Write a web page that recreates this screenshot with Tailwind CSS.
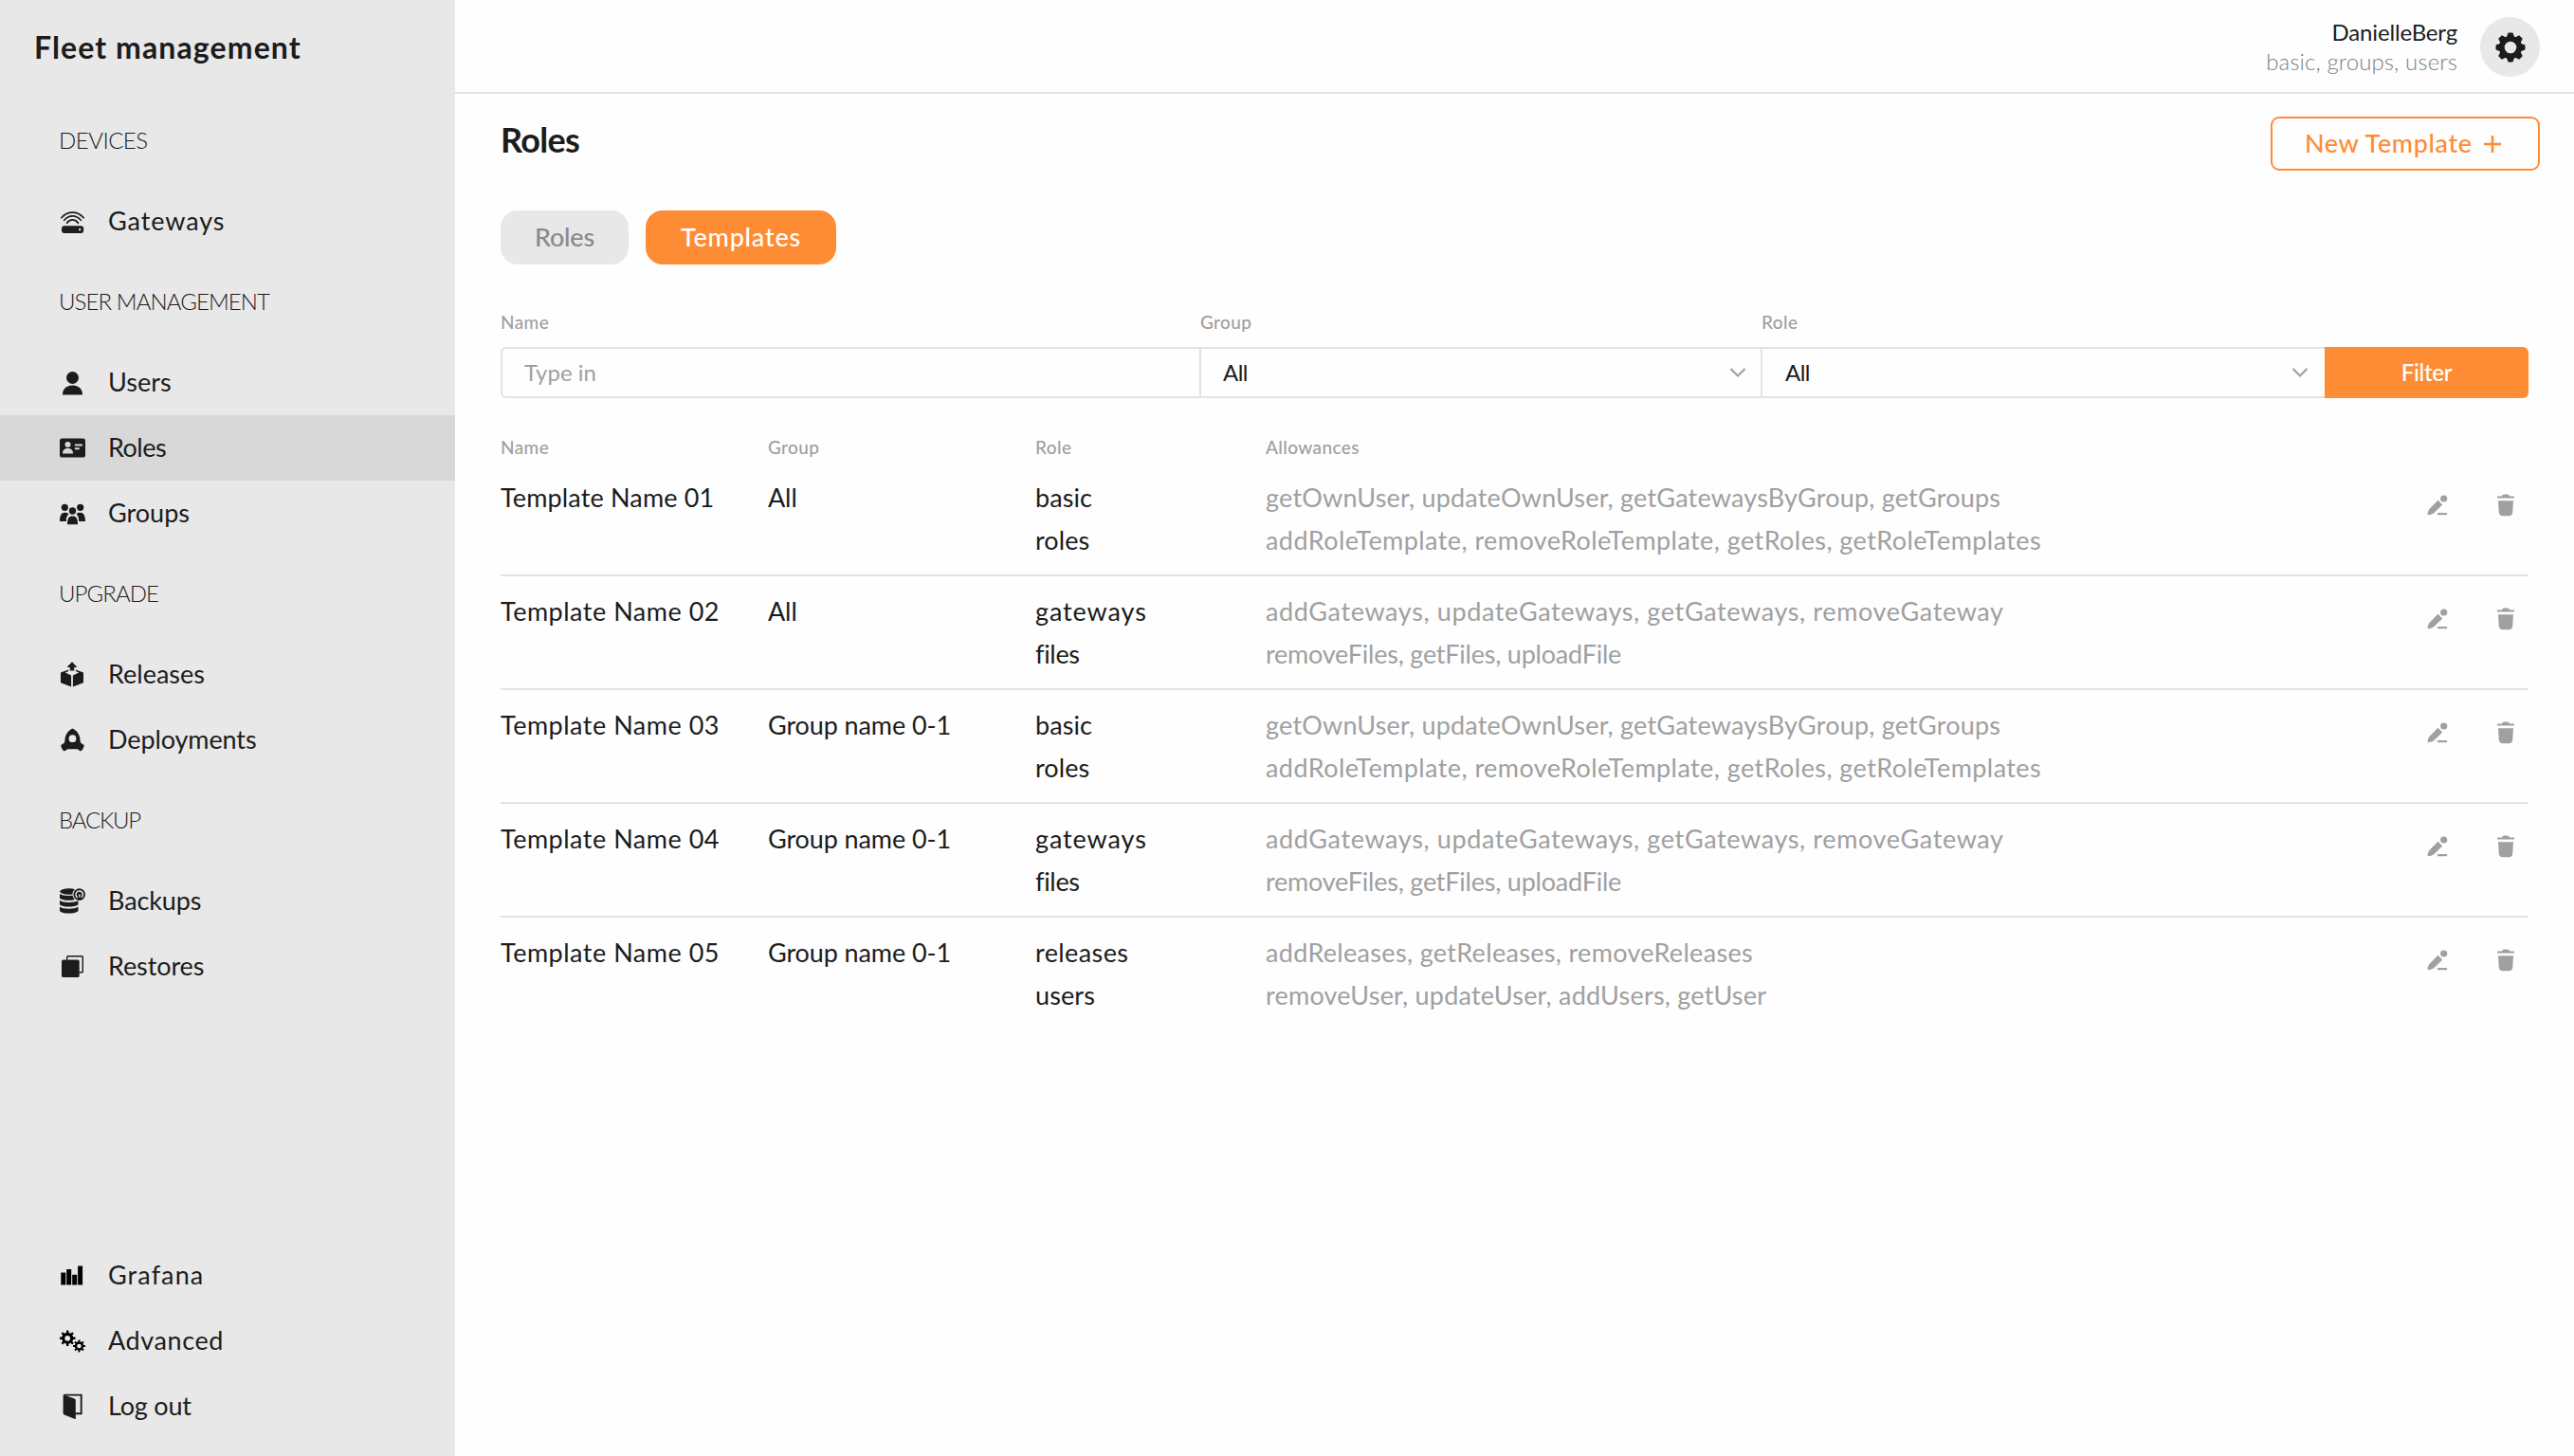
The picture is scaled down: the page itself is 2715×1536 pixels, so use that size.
<!DOCTYPE html>
<html lang="en">
<head>
    <meta charset="UTF-8">
    <meta name="viewport" content="width=device-width, initial-scale=1.0">
    <title>Fleet management</title>
    <script src="https://cdn.jsdelivr.net/npm/@tailwindcss/browser@4"></script>
</head>
<body class="bg-[#fefefe] h-screen flex overflow-hidden font-['Lato',sans-serif] text-[#1c1c1c]">

    <!-- Sidebar -->
    <aside class="w-[480px] h-full shrink-0 bg-[#e8e8e8] flex flex-col pb-[18px]">
        <h1 class="h-[98px] pl-[36px] pt-[30px] text-[32px] leading-[40px] font-bold tracking-[1.1px]">Fleet management</h1>

        <nav class="flex flex-col">
            <h2 class="h-[101px] flex items-center pl-[62px] pb-px text-[24px] font-light tracking-[-0.5px]">DEVICES</h2>
            <a class="h-[69px] flex items-center pl-[63px] gap-[24px] text-[27px] tracking-[0.9px]">
                <svg class="size-[27px]" viewBox="0 0 27 27" fill="none" stroke="currentColor" stroke-width="1.7" stroke-linecap="round">
                    <path d="M1.8 9.8C8.4 2.2 18.6 2.2 25.2 9.8M4.7 12.3C9.9 6.4 17.1 6.4 22.3 12.3M7.6 15.3C10.7 10.8 16.3 10.8 19.4 15.3" />
                    <path fill="currentColor" stroke="none" fill-rule="evenodd" d="M5 18.3h17.2a3 3 0 0 1 3 3V23a3 3 0 0 1-3 3H5a3 3 0 0 1-3-3v-1.7a3 3 0 0 1 3-3zM20.2 21.1v2.2h2v-2.2z" />
                </svg>
                Gateways
            </a>

            <h2 class="h-[101px] flex items-center pl-[62px] pb-px text-[24px] font-light tracking-[-0.9px]">USER MANAGEMENT</h2>
            <a class="h-[69px] flex items-center pl-[63px] gap-[24px] text-[27px]">
                <svg class="size-[27px]" viewBox="0 0 27 27" fill="currentColor">
                    <circle cx="13.5" cy="8.5" r="6.5" />
                    <path d="M3 26.5C3 20 7.5 16.6 13.5 16.6S24 20 24 26.5z" />
                </svg>
                Users
            </a>
            <a class="h-[69px] flex items-center pl-[63px] gap-[24px] text-[27px] tracking-[-0.5px] bg-[#d8d8d8]">
                <svg class="size-[27px]" viewBox="0 0 27 27">
                    <rect y="3.5" width="27" height="20" rx="2.6" fill="currentColor" />
                    <g fill="#d8d8d8">
                        <circle cx="8.5" cy="10" r="3" />
                        <path d="M3 19.6C3 16 5 14.1 8.5 14.1S14 16 14 19.6z" />
                        <rect x="15.7" y="9.5" width="8.5" height="2" rx="1" />
                        <rect x="15.7" y="13.2" width="5.3" height="2" rx="1" />
                    </g>
                </svg>
                Roles
            </a>
            <a class="h-[69px] flex items-center pl-[63px] gap-[24px] text-[27px]">
                <svg class="size-[27px]" viewBox="0 0 27 27" fill="currentColor">
                    <circle cx="5.3" cy="7.3" r="3.6" />
                    <circle cx="21.7" cy="7.3" r="3.6" />
                    <circle cx="13.5" cy="11" r="3.7" />
                    <path d="M0 22C0 15.5 2 12.8 5.3 12.8C7 12.8 8.4 13.2 9.5 14.3C7.5 16 6.8 18.5 6.8 22z" />
                    <path d="M27 22C27 15.5 25 12.8 21.7 12.8C20 12.8 18.6 13.2 17.5 14.3C19.5 16 20.2 18.5 20.2 22z" />
                    <path d="M8 25.3C8 19 9.5 16.5 13.5 16.5S19 19 19 25.3z" />
                </svg>
                Groups
            </a>

            <h2 class="h-[101px] flex items-center pl-[62px] pb-[2px] text-[24px] font-light tracking-[-0.9px]">UPGRADE</h2>
            <a class="h-[69px] flex items-center pl-[63px] gap-[24px] text-[27px]">
                <svg class="size-[27px]" viewBox="0 0 27 27" fill="currentColor">
                    <path d="M13 .3L17.9 5.2V6H15.2V9.6H10.8V6H8.1V5.2z" />
                    <path d="M1 11.5L9.2 8.6V10L5.8 11.4L12.1 14.6V26.6L1 22.3z" />
                    <path d="M25 11.5L16.8 8.6V10L20.2 11.4L13.9 14.6V26.6L25 22.3z" />
                </svg>
                Releases
            </a>
            <a class="h-[69px] flex items-center pl-[63px] gap-[24px] text-[27px] tracking-[-0.1px]">
                <svg class="size-[27px]" viewBox="0 0 27 27" fill="currentColor" fill-rule="evenodd">
                    <path d="M13.5 1.4C18.5 3.5 21.5 9 21.5 13.5L22 16.5L25.5 18.9C26.3 20 24 24.5 22.5 25.2C20.5 25.5 20 23.2 18 23.2H9C7 23.2 6.5 25.5 4.5 25.2C3 24.5 .7 20 1.5 18.9L5 16.5L5.5 13.5C5.5 9 8.5 3.5 13.5 1.4zM13.5 8.3a3.9 3.9 0 1 0 0 7.8a3.9 3.9 0 1 0 0-7.8z" />
                </svg>
                Deployments
            </a>

            <h2 class="h-[101px] flex items-center pl-[62px] pb-[2px] text-[24px] font-light tracking-[-1.2px]">BACKUP</h2>
            <a class="h-[69px] flex items-center pl-[63px] gap-[24px] pb-px text-[27px] tracking-[-0.1px]">
                <svg class="size-[27px]" viewBox="0 0 27 27" fill="currentColor">
                    <ellipse cx="9.8" cy="3.5" rx="9.6" ry="3.3" />
                    <path d="M0 6C3 8.6 16 8.6 19.5 6V10.5C16 13.6 3 13.6 0 10.5z" />
                    <path d="M0 12.7C3 15.7 16 15.7 19.5 12.7V17.2C16 20.3 3 20.3 0 17.2z" />
                    <path d="M0 19.4C3 22.4 16 22.4 19.5 19.4V23.9C16 27.4 3 27.4 0 23.9z" />
                    <circle cx="20.7" cy="6.6" r="7.3" fill="#e8e8e8" />
                    <circle cx="20.7" cy="6.6" r="6.3" />
                    <path d="M18.7 9.8A3.7 3.7 0 1 1 23 9.6M20.9 9.5V6.6" fill="none" stroke="#e8e8e8" stroke-width="1.5" />
                </svg>
                Backups
            </a>
            <a class="h-[69px] flex items-center pl-[63px] gap-[24px] pb-px text-[27px] tracking-[-0.1px]">
                <svg class="size-[27px]" viewBox="0 0 27 27" fill="currentColor">
                    <rect x="2" y="6.5" width="18.7" height="18.6" rx="1.7" />
                    <path d="M7.7 6.5V3.6Q7.7 2.7 8.6 2.7H23.4Q24.3 2.7 24.3 3.6V18.9Q24.3 19.8 23.4 19.8H20.5" fill="none" stroke="currentColor" stroke-width="1.4" />
                </svg>
                Restores
            </a>
        </nav>

        <nav class="mt-auto flex flex-col">
            <a class="h-[69px] flex items-center pl-[63px] gap-[24px] text-[27px] tracking-[1.1px]">
                <svg class="size-[27px]" viewBox="0 0 27 27" fill="#000">
                    <path d="M1.3 10.5h5v13h-5zM7.2 7h5v16.5h-5zM13.2 12.8h5v10.7h-5zM19.1 3.5h5v20h-5z" />
                </svg>
                Grafana
            </a>
            <a class="h-[69px] flex items-center pl-[63px] gap-[24px] text-[27px] tracking-[0.6px]">
                <svg class="size-[27px]" viewBox="0 0 27 27" fill="none" stroke="#000">
                    <circle cx="8.2" cy="10.8" r="4.5" stroke-width="3.2" />
                    <path stroke-width="2.4" d="M8.2 5.5V2.5M8.2 16.1V19.1M2.9 10.8H-.1M13.5 10.8H16.5M4.5 7.1L2.4 5M11.9 14.5L14 16.6M4.5 14.5L2.4 16.6M11.9 7.1L14 5" />
                    <circle cx="20.5" cy="19" r="3.5" stroke-width="2.4" />
                    <path stroke-width="1.9" d="M20.5 15V12.6M20.5 23V25.4M16.5 19H14.1M24.5 19H26.9M17.7 16.2L16 14.5M23.3 21.8L25 23.5M17.7 21.8L16 23.5M23.3 16.2L25 14.5" />
                </svg>
                Advanced
            </a>
            <a class="h-[69px] flex items-center pl-[63px] gap-[24px] text-[27px] tracking-[-0.2px]">
                <svg class="size-[27px]" viewBox="0 0 27 27" fill="currentColor">
                    <path d="M4.5 1.6H22.7V21.3H16.5" fill="none" stroke="currentColor" stroke-width="1.9" />
                    <path d="M3.6 1.2L15.5 5.4Q16.8 6 16.8 7.3V27.3L4.7 22.5Q3.6 22 3.6 20.8z" />
                </svg>
                Log out
            </a>
        </nav>
    </aside>

    <div class="flex-1 flex flex-col">
        <!-- Top bar -->
        <header class="h-[99px] shrink-0 border-b-2 border-[#e2e2e2] flex items-center justify-end pt-[2px] pr-9 gap-[24px]">
            <div class="flex flex-col items-end pb-[2px] text-[24px] leading-[31px]">
                <span class="tracking-[-0.15px]">DanielleBerg</span>
                <span class="font-light text-[#808080] tracking-[0.1px]">basic, groups, users</span>
            </div>
            <div class="size-[63px] rounded-full bg-[#e8e8e8] flex items-center justify-center">
                <svg class="size-[32px]" viewBox="-16 -16 32 32">
                    <circle r="9.2" fill="none" stroke="currentColor" stroke-width="5.8" />
                    <g fill="currentColor" stroke="currentColor" stroke-width="1" stroke-linejoin="round">
                        <path d="M-3.5-11L-2.2-15H2.2L3.5-11z" />
                        <path d="M-3.5-11L-2.2-15H2.2L3.5-11z" transform="rotate(45)" />
                        <path d="M-3.5-11L-2.2-15H2.2L3.5-11z" transform="rotate(90)" />
                        <path d="M-3.5-11L-2.2-15H2.2L3.5-11z" transform="rotate(135)" />
                        <path d="M-3.5-11L-2.2-15H2.2L3.5-11z" transform="rotate(180)" />
                        <path d="M-3.5-11L-2.2-15H2.2L3.5-11z" transform="rotate(225)" />
                        <path d="M-3.5-11L-2.2-15H2.2L3.5-11z" transform="rotate(270)" />
                        <path d="M-3.5-11L-2.2-15H2.2L3.5-11z" transform="rotate(315)" />
                    </g>
                </svg>
            </div>
        </header>

        <main class="pl-12 pr-9 pt-6">
            <div class="flex justify-between">
                <h2 class="pt-px text-[36px] leading-[46px] font-bold tracking-[-0.7px]">Roles</h2>
                <button class="w-[284px] h-[57px] border-2 border-[#fe8c35] rounded-[9px] flex items-center pl-[34px] gap-[11px] text-[27px] font-medium text-[#fe8c35] tracking-[0.6px]">
                    New Template
                    <svg class="size-[20px]" viewBox="0 0 20 20" fill="none" stroke="currentColor" stroke-width="2.6"><path d="M10 1V19M1 10H19" /></svg>
                </button>
            </div>

            <!-- Tabs -->
            <div class="mt-[42px] flex gap-[18px] text-[27px] font-medium">
                <button class="w-[135px] h-[57px] rounded-[18px] bg-[#e8e8e8] text-[#8a8a8a] tracking-[-0.2px]">Roles</button>
                <button class="w-[201px] h-[57px] rounded-[18px] bg-[#fe8c35] text-white tracking-[0.8px]">Templates</button>
            </div>

            <!-- Filter bar -->
            <div class="mt-[48px] w-[2139px]">
                <div class="flex text-[19px] leading-[26px] font-medium text-[#9f9f9f] tracking-[0.4px]">
                    <span class="w-[738px]">Name</span>
                    <span class="w-[592px]">Group</span>
                    <span>Role</span>
                </div>
                <div class="mt-[13px] h-[54px] flex text-[24px]">
                    <div class="w-[737px] border-2 border-r-0 border-[#e2e2e2] rounded-l-[6px] flex items-center pl-[23px] text-[#a0a0a0]">Type in</div>
                    <div class="w-[592px] border-2 border-r-0 border-[#e2e2e2] flex items-center justify-between pl-[23px] pr-[15px] tracking-[-0.5px]">
                        All
                        <svg class="w-[18px] h-[12px]" viewBox="0 0 18 12" fill="none" stroke="#a0a0a0" stroke-width="2.2"><path d="M1.5 2L9 9.5L16.5 2" /></svg>
                    </div>
                    <div class="w-[595px] border-2 border-r-0 border-[#e2e2e2] flex items-center justify-between pl-[24px] pr-[17px] tracking-[-0.5px]">
                        All
                        <svg class="w-[18px] h-[12px]" viewBox="0 0 18 12" fill="none" stroke="#a0a0a0" stroke-width="2.2"><path d="M1.5 2L9 9.5L16.5 2" /></svg>
                    </div>
                    <button class="flex-1 bg-[#fe8c35] rounded-r-[6px] text-white font-medium tracking-[-0.3px]">Filter</button>
                </div>
            </div>

            <!-- Table -->
            <div class="mt-[38px] w-[2139px]">
                <div class="h-[30px] grid grid-cols-[282px_282px_243px_1fr] text-[19px] leading-[28px] font-medium text-[#9f9f9f] tracking-[0.4px]">
                    <span>Name</span>
                    <span>Group</span>
                    <span>Role</span>
                    <span>Allowances</span>
                </div>
                <div id="rows"></div>
            </div>
        </main>
    </div>

    <script>
        // role, allowances, letter spacing of each
        const basic = ['basic', 'getOwnUser, updateOwnUser, getGatewaysByGroup, getGroups', 'tracking-[0.1px]', 'tracking-[0.2px]'];
        const roles = ['roles', 'addRoleTemplate, removeRoleTemplate, getRoles, getRoleTemplates', 'tracking-[0.1px]', 'tracking-[0.43px]'];
        const gateways = ['gateways', 'addGateways, updateGateways, getGateways, removeGateway', 'tracking-[0.9px]', 'tracking-[0.63px]'];
        const files = ['files', 'removeFiles, getFiles, uploadFile', 'tracking-[-0.3px]', 'tracking-[-0.22px]'];
        const releases = ['releases', 'addReleases, getReleases, removeReleases', 'tracking-[0.4px]', 'tracking-[0.32px]'];
        const users = ['users', 'removeUser, updateUser, addUsers, getUser', 'tracking-[0.1px]', 'tracking-[0.22px]'];

        const templates = [
            { name: 'Template Name 01', group: 'All', roles: [basic, roles], spacing: 'tracking-[0.15px]' },
            { name: 'Template Name 02', group: 'All', roles: [gateways, files], spacing: 'tracking-[0.5px]' },
            { name: 'Template Name 03', group: 'Group name 0-1', roles: [basic, roles], spacing: 'tracking-[0.5px]' },
            { name: 'Template Name 04', group: 'Group name 0-1', roles: [gateways, files], spacing: 'tracking-[0.5px]' },
            { name: 'Template Name 05', group: 'Group name 0-1', roles: [releases, users], spacing: 'tracking-[0.5px]' },
        ];

        const editIcon = `
            <svg class="size-[24px]" viewBox="0 0 24 24" fill="currentColor">
                <circle cx="18.7" cy="5" r="3.6" />
                <path d="M12.5 6.8L17.2 11.5L8 20.5Q5.5 22.3 1.6 22.3Q1.4 18.5 3.4 16z" />
                <rect x="11.8" y="19.9" width="10.4" height="2.4" rx="1" />
            </svg>`;

        const trashIcon = `
            <svg class="size-[24px]" viewBox="0 0 24 24" fill="currentColor">
                <path d="M3 4.6V2.6H7.8Q8.6 .4 10.5 .4H13.5Q15.4 .4 16.2 2.6H21V4.6z" />
                <path d="M4 7.3H20L19.2 19.5Q18.8 23.3 15.2 23.3H8.8Q5.2 23.3 4.8 19.5z" />
            </svg>`;

        document.getElementById('rows').innerHTML = templates.map(t => `
            <div class="h-[120px] pt-[14px] grid grid-cols-[282px_282px_243px_1fr_auto] text-[27px] leading-[45px] border-b-2 border-[#e2e2e2] last:border-b-0">
                <div class="${t.spacing}">${t.name}</div>
                <div class="tracking-[-0.1px]">${t.group}</div>
                <div>${t.roles.map(r => `<div class="${r[2]}">${r[0]}</div>`).join('')}</div>
                <div class="text-[#a0a0a0]">${t.roles.map(r => `<div class="${r[3]}">${r[1]}</div>`).join('')}</div>
                <div class="flex gap-[48px] pt-[19px] pr-[12px] text-[#a0a0a0]">${editIcon}${trashIcon}</div>
            </div>`).join('');
    </script>
</body>
</html>
